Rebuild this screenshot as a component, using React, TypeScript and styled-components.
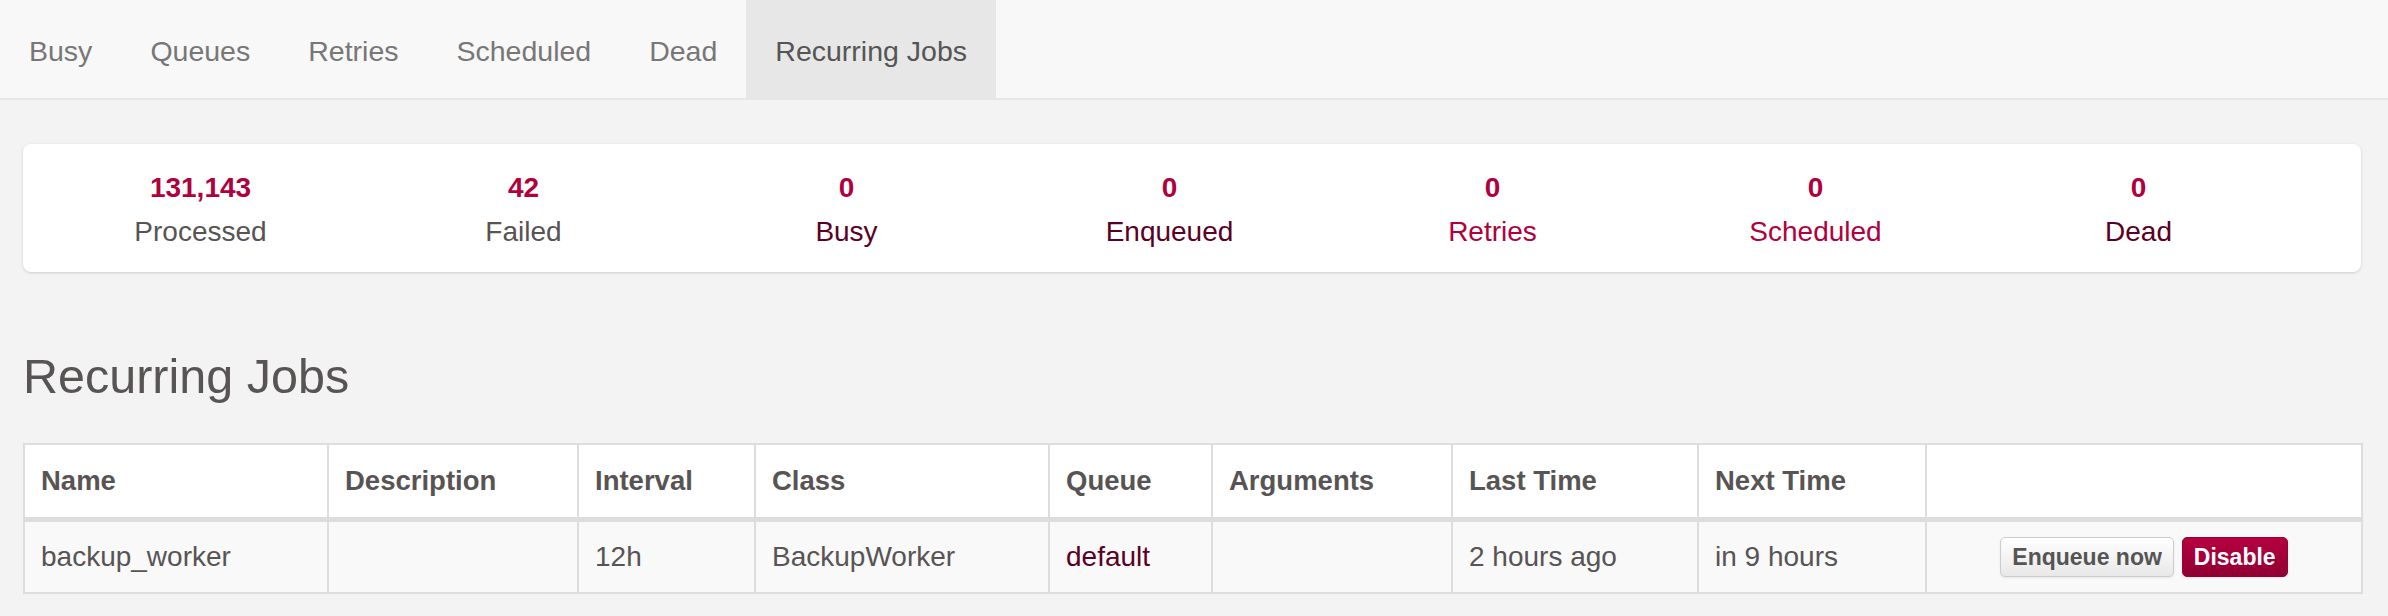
import styled, { createGlobalStyle } from "styled-components";

const GlobalStyle = createGlobalStyle`
  html, body {
    margin: 0;
    padding: 0;
    background: #f3f3f3;
    font-family: "Liberation Sans", Arial, Helvetica, sans-serif;
    color: #585454;
  }
`;

const Navbar = styled.nav`
  display: flex;
  height: 98px;
  background: #f8f8f8;
  border-bottom: 2px solid #e7e7e7;
`;

const Tab = styled.a<{ $active?: boolean }>`
  display: flex;
  align-items: center;
  padding: 4px 29px 0 29px;
  font-size: 28.5px;
  color: ${(p) => (p.$active ? "#555" : "#777")};
  background: ${(p) => (p.$active ? "#e7e7e7" : "transparent")};
  text-decoration: none;
`;

const Container = styled.div`
  padding: 0 27px 0 23px;
`;

const StatsCard = styled.div`
  margin-top: 44px;
  height: 128px;
  box-sizing: border-box;
  padding: 28px 0 0 16px;
  background: #fff;
  border-radius: 8px;
  box-shadow: 0 1px 3px rgba(0, 0, 0, 0.16);
  display: grid;
  grid-template-columns: repeat(7, 323px);
`;

const Stat = styled.div`
  display: flex;
  flex-direction: column;
  align-items: center;
  gap: 11px;
`;

const StatValue = styled.span`
  font-size: 28px;
  font-weight: bold;
  line-height: 32px;
  color: #b1003e;
`;

const StatLabel = styled.span<{ $tone: "plain" | "dark" | "link" }>`
  font-size: 28px;
  line-height: 34px;
  color: ${(p) =>
    p.$tone === "plain" ? "#585454" : p.$tone === "dark" ? "#5b0024" : "#b1003e"};
`;

const Heading = styled.h3`
  margin: 79px 0 41px 0;
  font-size: 48.5px;
  line-height: 51px;
  font-weight: normal;
  color: #585454;
`;

const Table = styled.table`
  width: 100%;
  table-layout: fixed;
  border-collapse: collapse;
  border: 2px solid #ddd;
  font-size: 28px;
`;

const HeadCell = styled.th`
  height: 72px;
  padding: 0 16px;
  text-align: left;
  font-size: 27.5px;
  font-weight: bold;
  background: #fff;
  border: 2px solid #ddd;
  border-bottom: 5px solid #ddd;
  color: #585454;
`;

const Cell = styled.td<{ $center?: boolean }>`
  height: 70px;
  padding: 0 16px;
  background: #f9f9f9;
  border: 2px solid #ddd;
  text-align: ${(p) => (p.$center ? "center" : "left")};
  color: #585454;
`;

const QueueLink = styled.a`
  color: #5b0024;
  text-decoration: none;
`;

const Button = styled.button<{ $danger?: boolean }>`
  height: 40px;
  padding: 0 11px;
  margin: 0 4px;
  border-radius: 5px;
  font-family: "Liberation Sans", Arial, sans-serif;
  font-size: 23px;
  font-weight: bold;
  vertical-align: middle;
  cursor: pointer;
  color: ${(p) => (p.$danger ? "#fff" : "#555")};
  border: 1px solid ${(p) => (p.$danger ? "#9a0036" : "#ccc")};
  background: ${(p) =>
    p.$danger
      ? "linear-gradient(#b5003f, #8f0032)"
      : "linear-gradient(#ffffff, #e8e8e8)"};
  box-shadow: 0 1px 2px rgba(0, 0, 0, 0.08);
`;

const tabs = ["Busy", "Queues", "Retries", "Scheduled", "Dead", "Recurring Jobs"];

const stats: { value: string; label: string; tone: "plain" | "dark" | "link" }[] = [
  { value: "131,143", label: "Processed", tone: "plain" },
  { value: "42", label: "Failed", tone: "plain" },
  { value: "0", label: "Busy", tone: "dark" },
  { value: "0", label: "Enqueued", tone: "dark" },
  { value: "0", label: "Retries", tone: "link" },
  { value: "0", label: "Scheduled", tone: "link" },
  { value: "0", label: "Dead", tone: "dark" },
];

const columns = [
  { title: "Name", width: 304 },
  { title: "Description", width: 250 },
  { title: "Interval", width: 177 },
  { title: "Class", width: 294 },
  { title: "Queue", width: 163 },
  { title: "Arguments", width: 240 },
  { title: "Last Time", width: 246 },
  { title: "Next Time", width: 228 },
  { title: "", width: 436 },
];

const App = () => {
  return (
    <>
      <GlobalStyle />
      <Navbar>
        {tabs.map((t) => (
          <Tab key={t} $active={t === "Recurring Jobs"}>
            {t}
          </Tab>
        ))}
      </Navbar>
      <Container>
        <StatsCard>
          {stats.map((s) => (
            <Stat key={s.label}>
              <StatValue>{s.value}</StatValue>
              <StatLabel $tone={s.tone}>{s.label}</StatLabel>
            </Stat>
          ))}
        </StatsCard>

        <Heading>Recurring Jobs</Heading>

        <Table>
          <colgroup>
            {columns.map((c, i) => (
              <col key={i} style={{ width: c.width }} />
            ))}
          </colgroup>
          <thead>
            <tr>
              {columns.map((c, i) => (
                <HeadCell key={i}>{c.title}</HeadCell>
              ))}
            </tr>
          </thead>
          <tbody>
            <tr>
              <Cell>backup_worker</Cell>
              <Cell></Cell>
              <Cell>12h</Cell>
              <Cell>BackupWorker</Cell>
              <Cell>
                <QueueLink>default</QueueLink>
              </Cell>
              <Cell></Cell>
              <Cell>2 hours ago</Cell>
              <Cell>in 9 hours</Cell>
              <Cell $center>
                <Button>Enqueue now</Button>
                <Button $danger>Disable</Button>
              </Cell>
            </tr>
          </tbody>
        </Table>
      </Container>
    </>
  );
};

export default App;
